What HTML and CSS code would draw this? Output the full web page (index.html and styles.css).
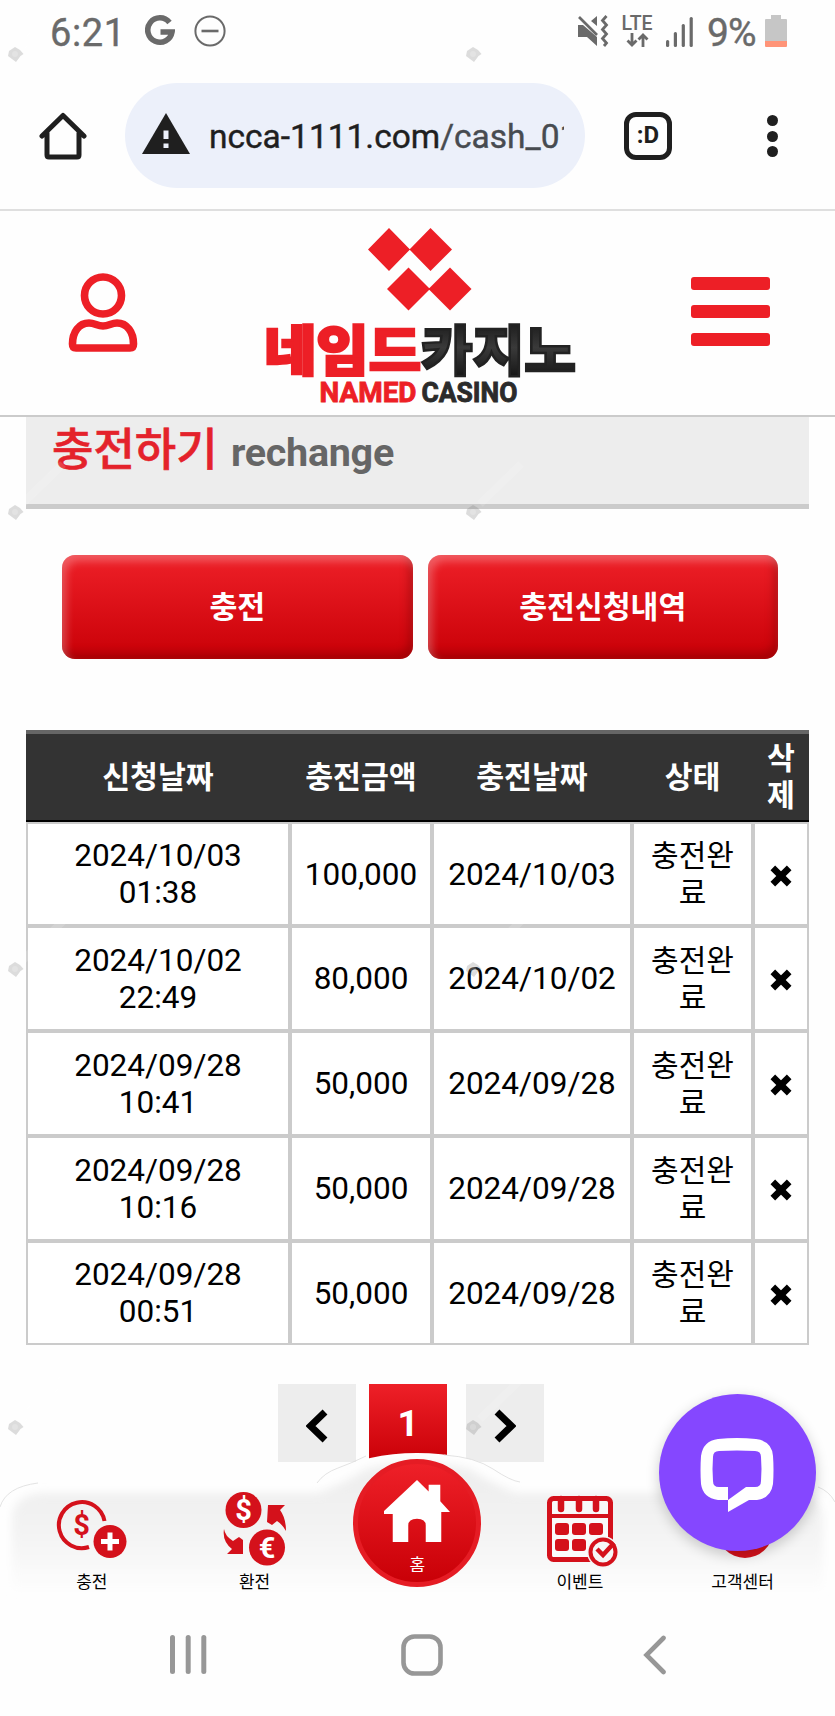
FILE: index.html
```html
<!DOCTYPE html>
<html lang="ko">
<head>
<meta charset="utf-8">
<meta name="viewport" content="width=device-width">
<title>충전하기</title>
<link rel="stylesheet" href="styles.css">
</head>
<body>
<div class="screen">
  <div class="status">
    <span class="clock">6:21</span>
    <svg class="g-icon" width="30" height="32" viewBox="0 0 30 32"><path d="M24.5 7.4A12.2 12.2 0 1 0 27 17H15.5" fill="none" stroke="#6a6a6a" stroke-width="5.6"/></svg>
    <svg class="dnd-icon" width="32" height="32" viewBox="0 0 32 32" fill="none" stroke="#6a6a6a"><circle cx="16" cy="16" r="14.6" stroke-width="2"/><path d="M7.500 16h17" stroke-width="2.600"/></svg>
    <div class="status-right">
      <svg width="32" height="32" viewBox="0 0 32 32"><path fill="#6a6a6a" d="M1 10h5l14 12v9L10 22H1zM20 1v10l-6-5z"/><path d="M2 2l18 18" stroke="#6a6a6a" stroke-width="2.600"/><path d="M29.500 1l-4 4.500 4 4.500-4 4.500 4 4.500-4 4.500 4 4.500-2.500 3" fill="none" stroke="#6a6a6a" stroke-width="2.800"/></svg>
      <div class="lte"><span>LTE</span><svg width="24" height="14" viewBox="0 0 24 14" fill="none" stroke="#6a6a6a" stroke-width="2.800"><path d="M7 0v12M2.500 7.500L7 12l4.500-4.500M18 14V2M13.500 6.500L18 2l4.500 4.500"/></svg></div>
      <svg class="signal" width="28" height="30" viewBox="0 0 28 30" fill="#6a6a6a"><rect y="23" width="3.200" height="7" rx="1.500"/><rect x="7.800" y="15" width="3.200" height="15" rx="1.500"/><rect x="15.700" y="7" width="3.200" height="23" rx="1.500"/><rect x="23.600" width="3.200" height="30" rx="1.500"/></svg>
      <span class="percent">9%</span>
      <svg class="battery" width="22" height="32" viewBox="0 0 22 32"><path d="M6 0h10v4h5a1 1 0 0 1 1 1v21H0V5a1 1 0 0 1 1-1h5z" fill="#c6c6c6"/><path d="M0 26h22v5a1 1 0 0 1-1 1H1a1 1 0 0 1-1-1z" fill="#ff9478"/></svg>
    </div>
  </div>

  <div class="browser">
    <svg class="b-home" width="48" height="48" viewBox="0 0 48 48" fill="none" stroke="#1f1f1f" stroke-width="5" stroke-linejoin="round" stroke-linecap="round"><path d="M3 24L24 3.500 45 24M8 21v22q0 2 2 2h28q2 0 2-2V21"/></svg>
    <div class="address">
      <svg width="48" height="42" viewBox="0 0 48 42"><path d="M24 0L48 41H0z" fill="#1f1f1f"/><path d="M21.500 17.500h5V26h-5zM21.500 30.500h5v4.500h-5z" fill="#ecf0fa"/></svg>
      <div class="url">ncca-1111.com<span>/cash_01</span></div>
    </div>
    <div class="tabs">:D</div>
    <div class="dots"><i></i><i></i><i></i></div>
  </div>

  <header class="site-head">
    <svg class="user" width="70" height="80" viewBox="0 0 70 80" fill="none" stroke="#ed1f26" stroke-width="7.600"><circle cx="35" cy="23.500" r="18.500"/><path d="M8 76h54q3.500 0 3.500-4C65.500 60 59 51 49 51c-6 0-8 3-14 3s-8-3-14-3C11 51 4.500 60 4.500 72q0 4 3.500 4z"/></svg>
    <svg class="logo" width="312" height="184" viewBox="0 0 312 184">
      <defs><linearGradient id="ink" x1="0" y1="0" x2="0" y2="1"><stop offset="0" stop-color="#0a0a0a"/><stop offset=".5" stop-color="#3a3a3a"/><stop offset="1" stop-color="#0a0a0a"/></linearGradient></defs>
      <path d="M124 1l21 21.500L124 44 103 22.500zM165.500 1L187 22.500 165.500 44 144.500 22.500zM143.500 40.500L165 62l-21.500 21.500L122 62zM185 40.500L206.500 62 185 83.500 163.500 62z" fill="#ed1f26"/>
      <g class="logo-ko"><text x="-1" y="144" textLength="157" lengthAdjust="spacingAndGlyphs" fill="#ed1f26" stroke="#ed1f26">네임드</text><text x="156" y="144" textLength="155" lengthAdjust="spacingAndGlyphs" fill="url(#ink)" stroke="#222">카지노</text></g>
      <g class="logo-en"><text x="54.500" y="175" textLength="97" lengthAdjust="spacingAndGlyphs" fill="#ed1f26" stroke="#ed1f26">NAMED</text><text x="156.500" y="175" textLength="96" lengthAdjust="spacingAndGlyphs" fill="#2b2b2b" stroke="#2b2b2b">CASINO</text></g>
    </svg>
    <div class="burger"><i></i><i></i><i></i></div>
  </header>

  <main class="page">
    <h1 class="title"><strong>충전하기</strong><span>rechange</span></h1>
    <div class="actions"><a class="btn">충전</a><a class="btn">충전신청내역</a></div>
    <table class="list">
      <colgroup><col class="c1"><col class="c2"><col class="c3"><col class="c4"><col class="c5"></colgroup>
      <thead><tr><th>신청날짜</th><th>충전금액</th><th>충전날짜</th><th>상태</th><th>삭<br>제</th></tr></thead>
      <tbody>
        <tr><td>2024/10/03<br>01:38</td><td>100,000</td><td>2024/10/03</td><td class="ko">충전완<br>료</td><td><svg class="x" viewBox="0 0 22 22"><path d="M3.500 3.500l15 15M18.500 3.500l-15 15"/></svg></td></tr>
        <tr><td>2024/10/02<br>22:49</td><td>80,000</td><td>2024/10/02</td><td class="ko">충전완<br>료</td><td><svg class="x" viewBox="0 0 22 22"><path d="M3.500 3.500l15 15M18.500 3.500l-15 15"/></svg></td></tr>
        <tr><td>2024/09/28<br>10:41</td><td>50,000</td><td>2024/09/28</td><td class="ko">충전완<br>료</td><td><svg class="x" viewBox="0 0 22 22"><path d="M3.500 3.500l15 15M18.500 3.500l-15 15"/></svg></td></tr>
        <tr><td>2024/09/28<br>10:16</td><td>50,000</td><td>2024/09/28</td><td class="ko">충전완<br>료</td><td><svg class="x" viewBox="0 0 22 22"><path d="M3.500 3.500l15 15M18.500 3.500l-15 15"/></svg></td></tr>
        <tr><td>2024/09/28<br>00:51</td><td>50,000</td><td>2024/09/28</td><td class="ko">충전완<br>료</td><td><svg class="x" viewBox="0 0 22 22"><path d="M3.500 3.500l15 15M18.500 3.500l-15 15"/></svg></td></tr>
      </tbody>
    </table>
    <div class="pager">
      <span class="pg"><svg width="22" height="34" viewBox="0 0 22 34"><path d="M19 3L4.500 17 19 31"/></svg></span>
      <span class="pg on">1</span>
      <span class="pg next"><svg width="22" height="34" viewBox="0 0 22 34"><path d="M3 3l14.500 14L3 31"/></svg></span>
    </div>
  </main>

  <nav class="dock">
    <svg class="dock-bg" width="835" height="146" viewBox="0 0 835 146">
      <defs>
        <linearGradient id="fade" gradientUnits="userSpaceOnUse" x1="0" y1="30" x2="0" y2="142"><stop offset="0" stop-color="#efefef"/><stop offset=".5" stop-color="#f4f4f4"/><stop offset="1" stop-color="#fefefe"/></linearGradient>
        <filter id="soft" x="-5%" y="-20%" width="110%" height="140%"><feGaussianBlur stdDeviation="4"/></filter>
      </defs>
      <path d="M0 62Q4 34 38 31H300Q318 31 328 20Q368 0 417 0T510 20Q520 31 536 31H797Q830 34 835 62V146H0z" fill="#fefefe"/>
      <path d="M12 146V62Q16 42 42 40H318Q345 30 366 16Q390 9 417 9T470 16Q490 30 516 40H793Q819 42 823 62V136H12z" fill="url(#fade)" filter="url(#soft)"/>
      <path d="M0 54Q6 34 38 30M317 30Q324 20 338 15T366 3M444 2Q475 4 493 16T520 29M818 34Q829 38 835 49" fill="none" stroke="#dcdcdc" stroke-width=".8"/>
    </svg>
    <a class="item coin"><svg width="74" height="62" viewBox="0 0 74 62"><path d="M49.500 20A23 23 0 1 0 34 46" fill="none" stroke="#d4111b" stroke-width="4"/><text class="coin-sign" x="26.500" y="34" fill="#d4111b">$</text><circle cx="55" cy="40.500" r="16.500" fill="#d4111b"/><path d="M46 40.500h18M55 31.500v18" stroke="#fff" stroke-width="5"/></svg><span>충전</span></a>
    <a class="item swap"><svg width="64" height="74" viewBox="0 0 64 74"><circle cx="20.500" cy="18" r="18" fill="#d4111b"/><text class="coin-sign" x="20.500" y="28" fill="#fff">$</text><circle cx="44" cy="55.500" r="18" fill="#d4111b"/><text class="coin-sign" x="44" y="65.500" fill="#fff">€</text><path d="M45 13h17l-5 5q6 8 6 21-4-7-9-10l-5 4-5-3zM1 37q1 7 9 12l6-4 4 3v14H4l5-5Q-1 49 1 37z" fill="#d4111b"/></svg><span>환전</span></a>
    <a class="home"><svg width="66" height="66" viewBox="0 0 68 66" fill="#fff"><path d="M34 0l12 12V5h12v17l10 11h-9v31H43V47q0-7-9-7t-9 7v17H9V35H0v-3z"/></svg><span>홈</span></a>
    <a class="item event"><svg width="72" height="72" viewBox="0 0 72 72"><rect x="3.500" y="3.500" width="61" height="61" rx="4" fill="#fff" fill-opacity=".5" stroke="#d4111b" stroke-width="5"/><path d="M4 21h60" stroke="#d4111b" stroke-width="4"/><path d="M15 4v10M33 4v10M50 4v10" stroke="#d4111b" stroke-width="6.500" stroke-linecap="round"/><g fill="#d4111b"><rect x="9" y="28" width="14" height="12" rx="3"/><rect x="26" y="28" width="14" height="12" rx="3"/><rect x="43" y="28" width="14" height="12" rx="3"/><rect x="9" y="44" width="14" height="12" rx="3"/><rect x="26" y="44" width="14" height="12" rx="3"/></g><circle cx="57" cy="57" r="16" fill="#f6f6f6"/><circle cx="57" cy="57" r="12.500" fill="#f6f6f6" stroke="#d4111b" stroke-width="4"/><path d="M51 54l6 6 11-12" fill="none" stroke="#d4111b" stroke-width="4.500"/></svg><span>이벤트</span></a>
    <a class="item help"><svg width="60" height="70" viewBox="0 0 60 70"><circle cx="32" cy="33" r="28" fill="#d4111b"/></svg><span>고객센터</span></a>
    <div class="chat"><svg width="74" height="74" viewBox="0 0 74 74"><path d="M18 1Q37-1 56 1 72 3 73 18q1 14 0 28-2 14-16 16H49L28 74V62H18Q3 60 1 46 0 32 1 18 3 3 18 1z" fill="#fff"/><path d="M19 13q18-1 36 0 6 0 6 6 1 12 0 24 0 6-6 6H46L28 62V49H19q-6 0-6-6-1-12 0-24 0-6 6-6z" fill="#8547ff"/></svg></div>
  </nav>

  <div class="sysbar">
    <svg width="37" height="40" viewBox="0 0 37 40" fill="#979797"><rect y="0" width="5" height="39" rx="2.500"/><rect x="15.700" width="5" height="39" rx="2.500"/><rect x="31.300" width="5" height="39" rx="2.500"/></svg>
    <svg class="recents" width="42" height="42" viewBox="0 0 42 42" fill="none" stroke="#979797" stroke-width="4.600"><rect x="2.500" y="2.500" width="37" height="37" rx="11"/></svg>
    <svg width="24" height="40" viewBox="0 0 24 40" fill="none" stroke="#979797" stroke-width="4.600" stroke-linecap="round"><path d="M20.500 3L3.500 20l17 17"/></svg>
  </div>

  <svg class="specks" width="835" height="1716" viewBox="0 0 835 1716">
    <defs><g id="speck"><path d="M0-7l5 3 3.500 4-3 2L1 8l-4-3-4-3 1-5z" fill="#777" fill-opacity=".25"/><circle r="3" fill="#fff" fill-opacity=".2"/><path d="M7-8L48-48" stroke="#fff" stroke-opacity=".14" stroke-width="8"/></g></defs>
    <use href="#speck" x="15" y="54"/><use href="#speck" x="473" y="54"/><use href="#speck" x="15" y="512"/><use href="#speck" x="473" y="512"/><use href="#speck" x="15" y="969"/><use href="#speck" x="473" y="969"/><use href="#speck" x="15" y="1427"/><use href="#speck" x="473" y="1427"/>
  </svg>
</div>
</body>
</html>
```

FILE: styles.css
```css
* { box-sizing: border-box; }
body { margin: 0; background: #fefefe; font-family: Roboto, "Noto Sans CJK KR", sans-serif; color: #000; }
svg { display: block; flex: none; }
.screen { position: relative; width: 835px; height: 1716px; overflow: hidden; display: flex; flex-direction: column; }

.status { height: 62px; display: flex; align-items: center; padding-left: 50px; color: #6a6a6a; flex: none; }
.clock { font-size: 38px; width: 95px; letter-spacing: .6px; line-height: 62px; padding-top: 3px; -webkit-text-stroke: .4px; }
.dnd-icon { margin-left: 19px; }
.status-right { display: flex; align-items: center; margin-left: auto; padding-right: 48px; }
.lte { width: 32px; margin-left: 12px; height: 34px; display: flex; flex-direction: column; align-items: center; }
.lte span { font-size: 19.500px; font-weight: 500; line-height: 19px; }
.signal { margin: 2px 0 0 13px; }
.percent { font-size: 39px; margin: 3px 0 0 13px; width: 58px; letter-spacing: -1px; white-space: nowrap; -webkit-text-stroke: .4px; }

.browser { height: 149px; display: flex; padding: 21px 0 0 39px; border-bottom: 2px solid #dfdfdf; flex: none; }
.b-home { margin-top: 29px; }
.address { width: 460px; height: 105px; margin-left: 38px; border-radius: 53px; background: #ecf0fa; display: flex; align-items: center; padding-left: 17px; }
.address svg { margin-top: -4px; }
.url { width: 355px; margin: 2px 0 0 19px; overflow: hidden; white-space: nowrap; font-size: 33.500px; color: #1f1f1f; -webkit-text-stroke: .4px; }
.url span { color: #474b50; }
.tabs { width: 48px; height: 48px; margin: 29px 0 0 39px; border: 5px solid #1f1f1f; border-radius: 12px; font-size: 24px; font-weight: 700; line-height: 37px; text-align: center; color: #1f1f1f; }
.dots { margin: 32px 0 0 95px; display: flex; flex-direction: column; gap: 4.500px; }
.dots i { width: 11px; height: 11px; border-radius: 50%; background: #1f1f1f; }

.site-head { height: 206px; flex: none; display: flex; padding: 16px 65px 0 68px; border-bottom: 2px solid #cbcbcb; }
.user { margin-top: 45px; }
.logo { margin-left: 127px; overflow: visible; }
.logo-ko text { font: 900 54px "Noto Sans CJK KR", sans-serif; stroke-width: 2.500px; }
.logo-en text { font: 700 28.500px Roboto, sans-serif; stroke-width: .9px; }
.burger { margin: 50px 0 0 auto; display: flex; flex-direction: column; gap: 15px; }
.burger i { width: 79px; height: 13px; border-radius: 3px; background: #ed1f26; }

.page { margin: 0 26px; flex: none; height: 1036px; }
.title { margin: 0; height: 92px; background: #ededed; border-bottom: 5px solid #cbcbcb; display: flex; align-items: baseline; padding: 4px 0 0 26px; color: #666; font-size: 39.500px; line-height: 60px; }
.title strong { color: #e4222b; font-size: 45px; font-weight: 500; -webkit-text-stroke: .6px; width: 179px; white-space: nowrap; }
.title span { letter-spacing: -.3px; }
.actions { display: flex; gap: 15px; padding: 46px 31px 0 36px; }
.btn { flex: 1; height: 104px; border-radius: 13px; color: #fff; font-size: 30.300px; font-weight: 700; text-align: center; line-height: 105px; background: linear-gradient(#ee2028, #c90007); box-shadow: inset 4px 6px 8px rgba(255,255,255,.28), inset -4px -6px 8px rgba(110,0,0,.4); }

.list { table-layout: fixed; width: 783px; margin-top: 71px; border-collapse: separate; border-spacing: 0; font-size: 31.500px; line-height: 37px; text-align: center; }
.c1 { width: 264px; } .c2 { width: 142px; } .c3 { width: 200px; } .c4 { width: 121px; } .c5 { width: 56px; }
.list th { height: 92px; padding: 0; background: #333; border-top: 4px solid #666; border-bottom: 2px solid #000; color: #fff; font-size: 30.300px; font-weight: 700; }
.list td { height: 105px; padding: 0; border: 2px solid #cbcbcb; background: #fff; }
.list tr:first-child td { height: 104px; }
.list tr:last-child td { height: 104px; }
.list .ko { font-size: 30px; }
.x { width: 24px; height: 24px; margin: 3px auto 0; }
.x path { stroke: #000; stroke-width: 6; }

.pager { display: flex; padding: 39px 0 0 252px; }
.pg { width: 78px; height: 78px; margin-right: 13px; background: #ededed; display: grid; place-items: center; padding-top: 6px; }
.pg path { fill: none; stroke: #000; stroke-width: 7; }
.on { background: linear-gradient(#ee2028, #c90007); color: #fff; font-size: 37px; font-weight: 700; width: 78px; margin-right: 19px; padding-top: 0; }

.dock { position: relative; height: 146px; flex: none; display: grid; grid-template-columns: repeat(5, 162.700px); padding: 40px 0 0 10.500px; }
.dock-bg { position: absolute; left: 0; top: 0; }
.item { position: relative; height: 106px; display: flex; flex-direction: column; align-items: center; justify-content: flex-end; gap: 3px; font-size: 17px; line-height: 24px; padding-bottom: 5px; }
.item svg { overflow: visible; }
.item.coin { gap: 7px; }
.item.swap { gap: 4px; }
.item.event svg { margin-left: 4px; }
.coin-sign { font: 700 29px Roboto, sans-serif; text-anchor: middle; }
.home { position: relative; width: 128px; height: 128px; margin: -34px 0 0 17.500px; border-radius: 50%; border: 5px solid #e51c24; background: linear-gradient(#ee2028, #c90007); color: #fff; font-size: 17px; line-height: 24px; display: flex; flex-direction: column; align-items: center; padding-top: 15px; gap: 8px; }
.chat { position: absolute; left: 659px; top: -59px; width: 157px; height: 157px; border-radius: 50%; background: #8547ff; display: grid; place-items: center; padding: 5px 2px 0 0; box-shadow: 0 4px 14px rgba(0,0,0,.2); }

.sysbar { flex: 1; display: flex; align-items: center; padding: 0 168px 5px 170px; justify-content: space-between; }
.recents { margin-right: 7px; }
.specks { position: absolute; left: 0; top: 0; pointer-events: none; }
```
